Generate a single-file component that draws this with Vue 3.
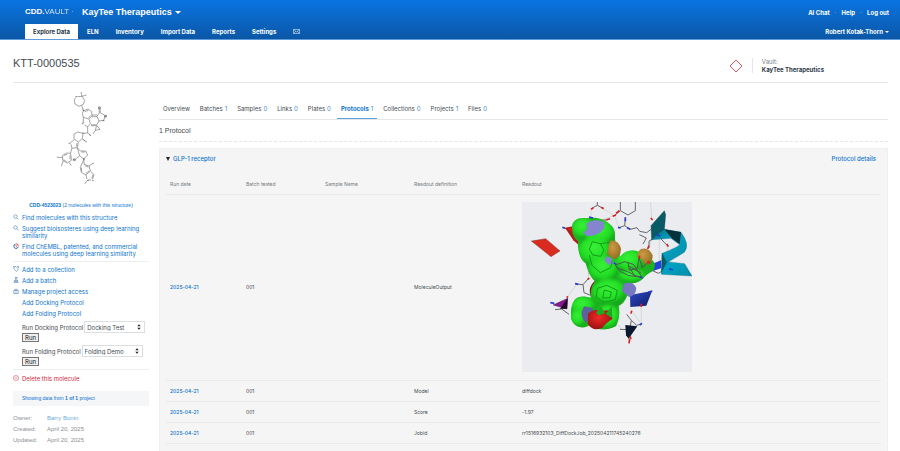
<script setup>
import { ref } from 'vue'

const nav = ['Explore Data', 'ELN', 'Inventory', 'Import Data', 'Reports', 'Settings']
const tabs = [
  { name: 'Overview' },
  { name: 'Batches', count: 1 },
  { name: 'Samples', count: 0 },
  { name: 'Links', count: 0 },
  { name: 'Plates', count: 0 },
  { name: 'Protocols', count: 1, active: true },
  { name: 'Collections', count: 0 },
  { name: 'Projects', count: 1 },
  { name: 'Files', count: 0 },
]
const rows = [
  { def: 'MoleculeOutput', picture: true },
  { def: 'Model', value: 'diffdock' },
  { def: 'Score', value: '-1.97' },
  { def: 'JobId', value: 'rr1516932103_DiffDockJob_202504211745240276' },
  { def: 'JobStatus', value: 'SUCCEEDED' },
]
const docking = ref('Docking Test')
const folding = ref('Folding Demo')
</script>

<template>
  <div class="page">
    <header class="top">
      <div class="brand-row">
        <a class="logo" href="#"><b>CDD.</b><span>VAULT</span><i>·</i></a>
        <button class="vault-switch" type="button">KayTee Therapeutics <span class="caret"></span></button>
        <nav class="account" aria-label="Account">
          <a href="#">AI Chat</a><i>·</i><a href="#">Help</a><i>·</i><a href="#">Log out</a>
        </nav>
      </div>
      <div class="nav-row">
        <nav class="main-nav" aria-label="Main">
          <a v-for="(item, i) in nav" :key="item" href="#" :class="{ active: i === 0 }">{{ item }}</a>
          <a href="#" aria-label="Messages">
            <svg class="mail" viewBox="0 0 14 10"><path d="M1 1h12v8H1zM1 1l6 5 6-5M1 9l4.500-4.500M13 9L8.500 4.500" /></svg>
          </a>
        </nav>
        <button class="user" type="button">Robert Kotak-Thorn <span class="caret small"></span></button>
      </div>
    </header>

    <section class="title-bar">
      <h1>KTT-0000535</h1>
      <div class="vault">
        <svg class="diamond" viewBox="0 0 14 14"><path d="M7 1l6 6-6 6-6-6z" /></svg>
        <div class="vault-name">
          <span>Vault:</span>
          <strong>KayTee Therapeutics</strong>
        </div>
      </div>
    </section>

    <div class="body">
      <aside class="side">
        <svg class="molecule" viewBox="135 9 225 300">
          <g class="bonds">
            <path d="M233 35L246 34L254 46L250 58L237 64L225 57L223 44L227 39M243 21L246 34L260 30M245 62L251 77" />
            <path d="M251 77L264 72L275 80L276 93L266 102L250 97L247 85zM254 80L265 76M272 92L265 98M250 97L250 115M254 120L263 125L271 117L268 103" />
            <path d="M276 90L291 90M276 95L291 95M291 94L299 82L313 90M315 95L311 106L297 108L291 94M298 82L297 72M301 82L300 72M297 108L290 120L273 119M273 122L288 122" />
            <path d="M290 121L300 133L286 136zM286 136L279 147M263 125L263 144L249 145M263 144L271 150" />
            <path d="M249 145L234 141L222 147L222 162L235 171L247 160zM222 165L211 173M213 178L216 190L232 188L235 172M229 185L231 174" />
            <path d="M215 190L212 204M212 205L214 226L202 234L188 226L188 211L200 204zM210 212L210 223M200 230L191 224M192 211L201 208" />
            <path d="M188 217L170 217M190 227L184 244M207 232L214 242M232 188L241 198L257 198L263 210L252 222L239 213zM244 201L255 201M238 214L227 221" />
            <path d="M252 222L252 238L267 243L271 258L258 270L244 262L241 247zM255 242L265 246M267 258L258 265M245 260L244 248M267 243L277 236" />
            <path d="M271 258L282 269L278 282M279 269L275 281M273 285L264 285M261 282L258 270M261 287L254 297" />
          </g>
          <g class="hetero">
            <path d="M226 35h6M296 66h5v5h-5zM314 91h5v5h-5zM308 107h5M248 113v5M268 149l5 3M206 175h5M220 222h6v4h-6zM277 236l4-2M261 286h5M276 286h5M247 162l13 9M247 74l5 4M248 144h3M249 222h5" />
          </g>
        </svg>
        <p class="same"><a href="#"><b>CDD-4523023</b> (2 molecules with this structure)</a></p>
        <ul class="actions">
          <li><svg viewBox="0 0 12 12"><circle cx="5" cy="5" r="3.500" /><path d="M7.700 7.700L11 11" /></svg><a href="#">Find molecules with this structure</a></li>
          <li><svg viewBox="0 0 12 12"><circle cx="5" cy="5" r="3.500" /><path d="M7.700 7.700L11 11" /></svg><a href="#">Suggest bioisosteres using deep learning similarity</a></li>
          <li><svg viewBox="0 0 12 12"><path class="ring" d="M5 2a4.500 4.500 0 1 0 5.500 5.500" /><path class="ring red" d="M6 1.500a4.500 4.500 0 0 1 4.500 5M5 5l3 2" /></svg><a href="#">Find ChEMBL, patented, and commercial molecules using deep learning similarity</a></li>
        </ul>
        <ul class="actions manage">
          <li><svg viewBox="0 0 12 12"><path d="M1 1h5l5 5-4 5-5-5zM8 1h3v3M3 3h1" /></svg><a href="#">Add to a collection</a></li>
          <li><svg viewBox="0 0 12 12"><path d="M4 1h5M5 1v4L2 9h8L7.500 5V1M1 11h10M3 7h6" /></svg><a href="#">Add a batch</a></li>
          <li><svg viewBox="0 0 12 12"><path d="M1.500 5h9v6h-9zM3.500 5V2.500h5V5M4 8h4" /></svg><a href="#">Manage project access</a></li>
          <li class="plain"><a href="#">Add Docking Protocol</a></li>
          <li class="plain"><a href="#">Add Folding Protocol</a></li>
        </ul>
        <form class="run" @submit.prevent>
          <label for="dock">Run Docking Protocol</label>
          <span class="pick">
            <select id="dock" v-model="docking"><option>Docking Test</option></select>
            <svg viewBox="0 0 6 8"><path d="M3 0l2.500 3h-5zM3 8L.500 5h5z" /></svg>
          </span>
          <button type="submit">Run</button>
        </form>
        <form class="run" @submit.prevent>
          <label for="fold">Run Folding Protocol</label>
          <span class="pick">
            <select id="fold" v-model="folding"><option>Folding Demo</option></select>
            <svg viewBox="0 0 6 8"><path d="M3 0l2.500 3h-5zM3 8L.500 5h5z" /></svg>
          </span>
          <button type="submit">Run</button>
        </form>
        <div class="delete">
          <svg viewBox="0 0 12 12"><circle cx="6" cy="6" r="5" /><path d="M3.500 6h5" /></svg>
          <a href="#">Delete this molecule</a>
        </div>
        <p class="showing"><a href="#">Showing data from <b>1 of 1</b> project</a></p>
        <dl class="meta">
          <dt>Owner:</dt><dd><a href="#">Barry Bunin</a></dd>
          <dt>Created:</dt><dd>April 20, 2025</dd>
          <dt>Updated:</dt><dd>April 20, 2025</dd>
        </dl>
      </aside>

      <main class="main">
        <nav class="tabs" aria-label="Molecule">
          <a v-for="t in tabs" :key="t.name" href="#" :class="{ active: t.active }">{{ t.name }}<span v-if="t.count !== undefined">{{ t.count }}</span></a>
        </nav>
        <h2>1 Protocol</h2>
        <section class="panel">
          <div class="panel-head">
            <button type="button"><span class="caret dark"></span>GLP-1 receptor</button>
            <a href="#">Protocol details</a>
          </div>
          <table>
            <colgroup><col class="c1"><col class="c2"><col class="c3"><col class="c4"><col></colgroup>
            <thead>
              <tr><th>Run date</th><th>Batch tested</th><th>Sample Name</th><th>Readout definition</th><th>Readout</th></tr>
            </thead>
            <tbody>
              <tr v-for="r in rows" :key="r.def" :class="{ tall: r.picture }">
                <td><a href="#">2025-04-21</a></td>
                <td>001</td>
                <td></td>
                <td>{{ r.def }}</td>
                <td>
                  <svg v-if="r.picture" class="pose" viewBox="21 21 510 510" role="img" aria-label="Docked pose">
                    <defs>
                      <radialGradient id="g" cx=".45" cy=".35" r=".65"><stop offset="0" stop-color="#38f238" /><stop offset=".6" stop-color="#22dd24" /><stop offset="1" stop-color="#129216" /></radialGradient>
                      <radialGradient id="o" cx=".4" cy=".35" r=".7"><stop offset="0" stop-color="#cf9a45" /><stop offset="1" stop-color="#8f6c22" /></radialGradient>
                      <radialGradient id="r" cx=".45" cy=".4" r=".65"><stop offset="0" stop-color="#f12a28" /><stop offset="1" stop-color="#96100f" /></radialGradient>
                      <linearGradient id="b" x1="0" y1="0" x2="1" y2="1"><stop offset="0" stop-color="#2d49c8" /><stop offset="1" stop-color="#101c66" /></linearGradient>
                      <linearGradient id="c" x1="0" y1="0" x2="1" y2="1"><stop offset="0" stop-color="#0a6b7c" /><stop offset=".4" stop-color="#00a3c4" /><stop offset="1" stop-color="#078ba8" /></linearGradient>
                      <filter id="soft"><feGaussianBlur stdDeviation="4" /></filter>
                      <clipPath id="body"><path d="M171 98c0-24 22-32 43-28 27-8 60 4 77 24 15 20 5 38 12 50 12 15 15 35 10 46 15-30 58-30 73-8 18 5 34 15 34 28 0 21-18 22-30 34-15 21-37 21-45 22-4 31-13 57-34 67 5 26-1 45-8 60-26 14-58 15-79-3-14 13-48 10-56-20-1-20 0-43 13-58 15-10 30-8 46-3-1-26 4-38 13-50-16-16-22-33-28-54-20-15-24-42-23-67-10-5-18-20-18-40z" /></clipPath>
                    </defs>
                    <rect x="21" y="21" width="510" height="510" fill="#ebecf0" />
                    <g class="thin">
                      <path d="M248 31l50 31-50 16M228 40v25M298 62l14 36M407 21l3 55M433 100v110M456 150l6 50M221 190v58M215 190l6 50M157 306l28-38M351 348l27 38M379 330v56M400 160l10-25M312 390l6 12" />
                    </g>
                    <g class="stick">
                      <path d="M230 40l17-9 17 9M247 21v10M316 21v26l23 13 22-13V21M298 62l18-15M226 67l22 9 25-1M312 98l17-6 2-24M329 92l17 11 20-5 8 11 21 4 13-10M384 147l10-18-21-10M402 158v-20l28-15 24 26M145 98l24 10 22 40M184 267l20 2 16-18M204 269l3 24 20 8M120 344l20-2 22 16M335 358l14 18-5 28-29-1M349 376l16 15 14-4M398 205l10 20 22 10 20-12 15 12" />
                    </g>
                    <path d="M49 138l43-7 43 37-27 17z" fill="#d92b20" stroke="#5d1714" />
                    <path d="M150 98l28-5 13 25v32l-16-14z" fill="#b21d18" />
                    <path d="M408 92l40-45 4 12-4 45-38 30z" fill="#075a66" stroke="#032d34" />
                    <path d="M410 134l38-31 50 9q28 38 10 60l-60 36-6-33q48-20 52-26l-26-19z" fill="url(#c)" stroke="#056878" />
                    <path d="M448 103l50 8-4 36-24-17z" fill="#04323b" />
                    <path d="M441 174l12 26 56 6 22 37-92-5z" fill="url(#c)" stroke="#056878" />
                    <path d="M441 174l14 27-16 34z" fill="#075a66" />
                    <path d="M390 216l48-20v24l-52 17z" fill="#2440df" />
                    <path d="M114 330l44-20-2 32z" fill="#86198f" stroke="#2e0d35" /><path d="M135 342l23-33-2 32z" fill="#260a2a" />
                    <path d="M345 300l66-12-17 44-48 4z" fill="url(#b)" />
                    <path d="M331 390l36 4-26 37-8-10z" fill="#0b1830" />
                    <path d="M239 258q-28 26-3 60l24-20z" fill="#7d1414" />
                    <g clip-path="url(#body)">
                      <rect x="160" y="60" width="270" height="350" fill="#1cb320" />
                      <g filter="url(#soft)">
                        <ellipse cx="205" cy="101" rx="34" ry="32" fill="url(#g)" /><ellipse cx="255" cy="116" rx="46" ry="40" fill="url(#g)" />
                        <ellipse cx="240" cy="170" rx="50" ry="45" fill="url(#g)" /><ellipse cx="266" cy="225" rx="45" ry="42" fill="url(#g)" />
                        <ellipse cx="345" cy="200" rx="42" ry="35" fill="url(#g)" /><ellipse cx="352" cy="243" rx="42" ry="20" fill="url(#g)" />
                        <ellipse cx="283" cy="293" rx="52" ry="40" fill="url(#g)" /><ellipse cx="204" cy="333" rx="36" ry="28" fill="url(#g)" />
                        <ellipse cx="190" cy="370" rx="24" ry="28" fill="url(#g)" /><ellipse cx="279" cy="368" rx="36" ry="38" fill="url(#g)" />
                      </g>
                    </g>
                    <path d="M214 86q22-18 53-5l1 18q-18 26-52 24l-12-10 13-10z" fill="#8584cf" />
                    <path d="M284 137q25-5 34 23 0 26-20 33l-22-16z" fill="url(#o)" /><path d="M374 164q26-12 39 17 0 25-19 30-9-4-13-18l-16-9z" fill="url(#o)" />
                    <path d="M272 184l17 5 8 16-16 4-12-11z" fill="#8584cf" />
                    <path d="M326 266q28-10 38 13-2 24-22 27l-21-18z" fill="#7776c1" />
                    <path d="M207 334l25 5 5 20-25 24q-14-15-12-33z" fill="#5d629d" />
                    <path d="M219 356q18-16 42-8l29-4 2 28q-20 12-30 27-30 11-44-13z" fill="url(#r)" />
                    <path d="M243 354l14-20 15 22 18-22 1 35-22-14-16 6z" fill="#1bad20" />
                    <g class="mesh">
                      <path d="M232 140l24 6 11 19-10 19-24-4-10-18zM256 146l30-4M223 180l8 31 25 22 31-15 5-22M247 280l28-9 32 15-6 28-33 8-24-15zM268 285l21 6-4 17-22 1z" />
                    </g>
                    <g class="stick heavy">
                      <path d="M301 210l28-10 26 8 26 38-40-4-24-12zM304 218l34 12 35 17M339 202l4 24 24-6 5-32 10 30 18-17M340 212l38 22M360 246l-15-28" />
                    </g>
                    <g class="oxy">
                      <path d="M228 43l7-4M259 37l7 4M273 75l12-4M293 64l10-4M303 55l10-8M407 69l6 6M398 162l4-10M455 147l5 8M373 182v10M398 198l8 8M155 304l4 4M218 253l5-4M348 356l2-9M379 326v10M344 431l-2 14M345 424l3 8M160 100l12 6" />
                    </g>
                    <g class="nit">
                      <path d="M222 66l12 3M331 67v12M309 97l8 2M336 98l10 5M425 119l11 4M142 97l8 2M180 266l10 2M106 323l12 2M374 390l7-5M462 221l12 4M400 291l12-3M296 203l8 6M374 246l9 3" />
                    </g>
                  </svg>
                  <template v-else>{{ r.value }}</template>
                </td>
              </tr>
            </tbody>
          </table>
        </section>
      </main>
    </div>
  </div>
</template>

<style>
body { background: #fff; overflow-x: hidden; }
</style>

<style scoped>
* { box-sizing: border-box; }
.page { font-family: Inter, "Liberation Sans", Arial, sans-serif; font-size: 6px; line-height: 7px; color: #444b52; height: 100vh; overflow: hidden; }
a { color: #0b73d0; text-decoration: none; }
button { font: inherit; color: inherit; border: 0; background: none; padding: 0; }
h1, h2, p, ul, dl, dd { margin: 0; padding: 0; font-weight: normal; }
h1, h2, .logo, .vault-switch, .same, .showing, .meta { font-family: "Liberation Sans", Arial, sans-serif; }
.top { height: 40px; padding: 0 11px 0 25px; background: linear-gradient(#0a74e2, #0b57a6); border-bottom: 1px solid #5d9bdc; color: #fff; display: flex; flex-direction: column; }
.top a { color: #fff; }
.brand-row { flex: 1; display: flex; align-items: center; }
.logo { font-size: 8px; line-height: 12px; width: 57px; display: flex; }
.logo span { opacity: .8; }
.logo i { opacity: .5; margin-left: 2px; }
.vault-switch { font-size: 9px; line-height: 12px; font-weight: bold; display: flex; align-items: center; gap: 3px; }
.caret { border: 3px solid transparent; border-top-color: currentColor; border-bottom: 0; }
.caret.small { border-width: 2px; border-bottom: 0; }
.caret.dark { border-width: 2px; border-top: 4px solid #222; border-bottom: 0; }
.account { margin-left: auto; display: flex; gap: 5px; font-weight: bold; }
.account i { opacity: .4; }
.nav-row { display: flex; justify-content: space-between; }
.main-nav { display: flex; gap: 1px; font-weight: bold; }
.main-nav a { height: 15px; padding: 4px 8px; display: flex; align-items: center; }
.main-nav a.active { background: #fff; color: #2b3a49; }
.mail { width: 7px; height: 5px; fill: none; stroke: #fff; stroke-width: 1; }
.user { font-weight: bold; display: flex; align-items: center; gap: 2px; }
.title-bar { margin: 0 12px 0 13px; height: 43px; border-bottom: 1px solid #e4e6e8; display: flex; justify-content: space-between; }
h1 { font-size: 11px; line-height: 13px; padding-top: 17px; }
.vault { display: flex; align-items: center; padding: 9px 64px 0 0; }
.diamond { width: 14px; height: 14px; fill: none; stroke: #df5563; stroke-width: 1; }
.vault-name { margin-left: 9px; padding-left: 9px; border-left: 1px solid #e4e6e8; display: grid; gap: 1px; }
.vault-name span { color: #7b8188; }
.vault-name strong { color: #2b3a49; }
.body { display: flex; gap: 10px; padding: 0 12px 0 13px; }
.side { width: 136px; flex: none; }
.molecule { display: block; width: 75px; height: 100px; margin: 5px 0 0 32px; fill: none; stroke: #777; stroke-width: 2; }
.hetero { stroke: #444; }
.same { font-size: 5px; text-align: center; padding: 14px 0 5px; }
.actions { list-style: none; display: grid; gap: 4px; padding-bottom: 4px; }
.actions li { display: grid; grid-template-columns: 6px 1fr; column-gap: 3px; }
.actions svg, .delete svg { width: 6px; height: 6px; fill: none; stroke: #2b6ca8; stroke-width: 1; }
.actions .ring { stroke-width: 2; }
.actions .ring.red { stroke: #d84a4a; }
.manage { border-top: 1px solid #eceef0; padding-top: 4px; }
.plain a { grid-column: 2; }
.run { padding: 0 0 3px 9px; white-space: nowrap; }
.pick { position: relative; display: inline-block; margin-left: 1px; }
.pick select { appearance: none; font: inherit; color: inherit; background: #fff; border: 1px solid #dcdfe2; height: 12px; width: 61px; padding: 0 2px; }
.pick svg { position: absolute; right: 4px; top: 3px; width: 4px; height: 6px; fill: #222; pointer-events: none; }
.run button { display: block; border: 1px solid #777; background: #efefef; color: #111; height: 9px; width: 17px; line-height: 7px; }
.delete { border-top: 1px solid #eceef0; padding: 5px 0; display: flex; gap: 3px; }
.delete a { color: #d8283c; }
.delete svg { stroke: #d8283c; }
.showing { font-size: 5px; background: #f5f6f7; padding: 4px 9px; margin-top: 4px; }
.meta { display: grid; grid-template-columns: 34px 1fr; row-gap: 4px; padding-top: 9px; color: #8b9196; }
.meta a { color: #6aace0; }
.main { flex: 1; min-width: 0; }
.tabs { display: flex; gap: 2px; border-bottom: 1px solid #e4e6e8; padding-top: 18px; }
.tabs a { color: #444b52; padding: 4px 4px 6px; border-bottom: 1px solid transparent; }
.tabs span { color: #3b87cf; margin-left: 2px; }
.tabs a.active { color: #0b73d0; font-weight: bold; border-bottom-color: #5aa2e0; }
.tabs .active span { font-weight: normal; }
h2 { font-size: 7px; line-height: 8px; padding: 7px 0 6px; border-bottom: 1px dashed #e4e6e8; }
.panel { margin-top: 6px; background: #f5f5f5; border: 1px solid #f0f0f0; padding: 0 6px; }
.panel-head { display: flex; justify-content: space-between; padding: 6px 5px 11px 0; }
.panel-head button, .panel-head a { color: #0b73d0; font-weight: 500; }
.panel-head button { display: flex; align-items: center; gap: 3px; }
table { width: 100%; border-collapse: collapse; table-layout: fixed; font-size: 5px; line-height: 6px; }
.c1 { width: 76px; } .c2 { width: 79px; } .c3 { width: 89px; } .c4 { width: 108px; }
th { text-align: left; font-weight: normal; color: #737a80; height: 21px; padding: 2px 4px 0; border-bottom: 1px solid #e9eaeb; }
td { height: 21px; padding: 0 4px; border-bottom: 1px solid #e9eaeb; }
td a { font-weight: 500; }
.tall td { height: 186px; }
.pose { display: block; width: 170px; height: 170px; }
.thin { fill: none; stroke: #aaa; stroke-width: 1; }
.stick { fill: none; stroke: #666; stroke-width: 3; }
.heavy { stroke: #4c5a4c; }
.mesh { fill: none; stroke: #159c1b; stroke-width: 3; }
.oxy { fill: none; stroke: #d62222; stroke-width: 5; }
.nit { fill: none; stroke: #2a3bd0; stroke-width: 5; }
</style>
